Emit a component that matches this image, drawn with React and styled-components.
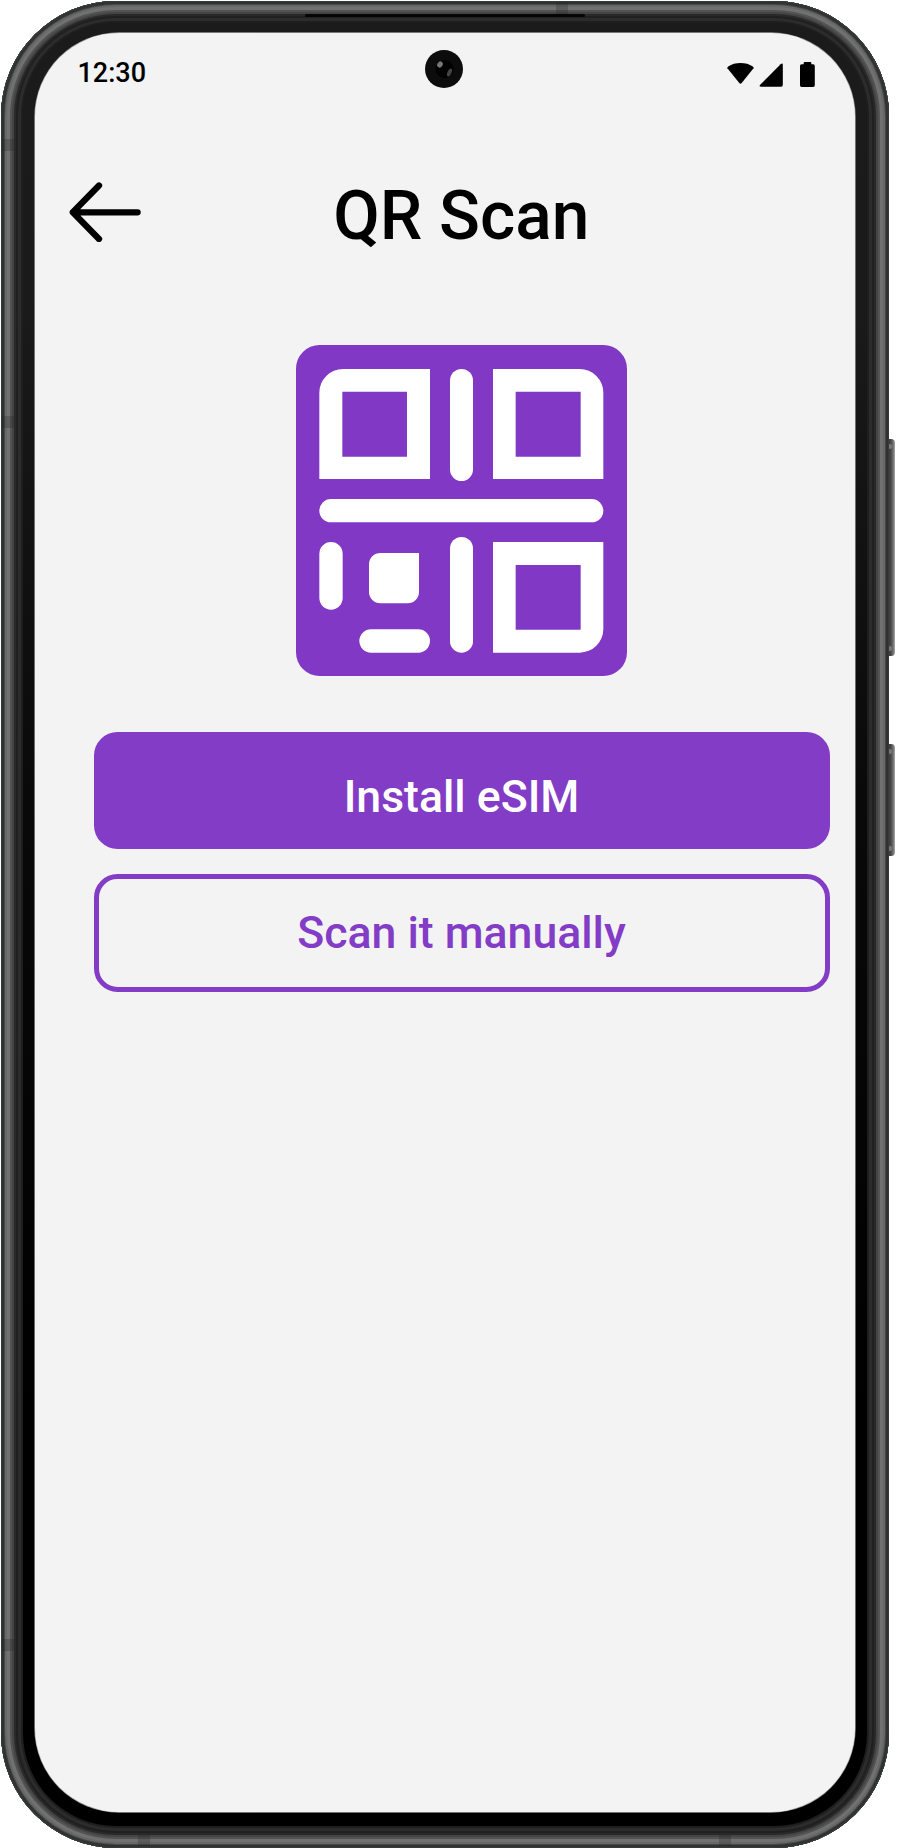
import React from "react";
import styled, { createGlobalStyle } from "styled-components";

const PURPLE = "#833cc6";

const GlobalStyle = createGlobalStyle`
  * { box-sizing: border-box; }
  body { margin: 0; background: #fff; font-family: Roboto, "Liberation Sans", sans-serif; }
`;

const Stage = styled.main`
  position: relative;
  width: 897px;
  height: 1848px;
  overflow: hidden;
  padding: 1px 0 0 1px;
`;

const Phone = styled.div`
  position: relative;
  width: 887.5px;
  height: 1846.5px;
  padding: 32px 33.5px 36px 33.5px;
  border-radius: 115px;
  background: linear-gradient(#1b1b1b 0, #1a1a1a 300px, #090909 800px, #000 1400px);
  box-shadow:
    inset 0 0 0 1px #363a3a,
    inset 0 0 0 3px #303131,
    inset 0 0 0 4px #494949,
    inset 0 0 0 6px #676767,
    inset 0 0 0 9px #717171,
    inset 0 0 0 11px #535353,
    inset 0 0 0 13px #444,
    inset 0 0 0 15px #292929,
    inset 0 0 0 17px #202020,
    inset 0 0 0 20px #2c2c2c,
    inset 0 0 0 22px #1e1e1e;
`;

const SideKey = styled.span`
  position: absolute;
  left: 887px;
  top: ${(p) => p.$top}px;
  width: 8px;
  height: ${(p) => p.$height}px;
  border-radius: 0 4px 4px 0;
  background: linear-gradient(90deg, #303030, #484848 50%, #777 80%, #aaa);

  &::before,
  &::after {
    content: "";
    position: absolute;
    left: 1px;
    width: 4px;
    height: 5px;
    border-radius: 2px;
    background: #777;
  }
  &::before { top: 5px; }
  &::after { bottom: 5px; }
`;

const Speaker = styled.span`
  position: absolute;
  left: 304px;
  top: 13px;
  width: 280px;
  height: 3px;
  border-radius: 2px;
  background: #050505;
`;

const Seam = styled.span`
  position: absolute;
  left: ${(p) => p.$x}px;
  top: ${(p) => p.$y}px;
  width: 12px;
  height: 12px;
  background: rgba(35, 35, 35, 0.26);
`;

const Screen = styled.section`
  position: relative;
  height: 100%;
  border-radius: 84px;
  background: #f3f3f3;
  box-shadow: 0 0 0 0.7px #999;
  display: flex;
  flex-direction: column;
`;

const Camera = styled.svg`
  position: absolute;
  left: 389px;
  top: 16px;
`;

const StatusBar = styled.div`
  display: flex;
  justify-content: space-between;
  align-items: flex-start;
  height: 112px;
  padding: 24px 39px 0 43px;
`;

const Time = styled.time`
  font-size: 27px;
  line-height: 32px;
  font-weight: 500;
  color: #000;
`;

const StatusIcons = styled.svg`
  margin-top: 4px;
`;

const Header = styled.header`
  display: grid;
  grid-template-columns: 72px 1fr 54px;
  align-items: start;
  height: 140px;
  padding: 0 19px 0 34px;
`;

const BackButton = styled.button`
  display: flex;
  margin-top: 37px;
  padding: 0;
  border: 0;
  background: none;
  color: #000;
`;

const Title = styled.h1`
  margin: 31px 0 0;
  text-align: center;
  font-size: 67.6px;
  line-height: 80px;
  font-weight: 500;
  color: #000;
`;

const Content = styled.div`
  display: flex;
  flex-direction: column;
  align-items: center;
  padding: 60.3px 25.5px 0 59px;
`;

const QrArt = styled.svg`
  display: block;
  margin-bottom: 55.7px;
`;

const Action = styled.button`
  width: 100%;
  height: 117.3px;
  margin-bottom: 25px;
  padding: ${(p) => (p.$outlined ? "1px 0 0" : "13px 0 0")};
  border: ${(p) => (p.$outlined ? `5px solid ${PURPLE}` : "0")};
  border-radius: 23.5px;
  background: ${(p) => (p.$outlined ? "transparent" : PURPLE)};
  color: ${(p) => (p.$outlined ? PURPLE : "#fff")};
  font-family: inherit;
  font-size: 44.6px;
  line-height: 53px;
  font-weight: 500;
`;

const BackArrow = () => (
  <svg width="72" height="60" viewBox="0 0 72 60" fill="none" stroke="currentColor" strokeWidth="6.3" strokeLinecap="round" strokeLinejoin="round">
    <path d="M68.6 30.3H3.8M30 3.5L3.8 30.3L30 57" />
  </svg>
);

const QrCode = () => (
  <QrArt width="331" height="331" viewBox="48 45 993 993" fill="#fff">
    <rect x="48" y="45" width="993" height="993" rx="71" fill="#8038c5" />
    <path fillRule="evenodd" d="M189 117H450V447H118V188A71 71 0 0 1 189 117ZM187 185V380H381V185Z" />
    <path fillRule="evenodd" d="M639 117H899A71 71 0 0 1 970 188V447H639ZM707 185V380H902V185Z" />
    <path fillRule="evenodd" d="M639 636H970V897A71 71 0 0 1 899 968H639ZM707 705V899H902V705Z" />
    <rect x="510" y="117" width="69" height="336" rx="34.5" />
    <rect x="118" y="507" width="852" height="70" rx="35" />
    <rect x="118" y="636" width="70" height="203" rx="35" />
    <rect x="510" y="621" width="69" height="347" rx="34.5" />
    <rect x="238" y="898" width="212" height="70" rx="35" />
    <path d="M301 669H417V786A34 34 0 0 1 383 820H301A34 34 0 0 1 267 786V703A34 34 0 0 1 301 669Z" />
  </QrArt>
);

export default function App() {
  return (
    <>
      <GlobalStyle />
      <Stage>
        <SideKey $top={439} $height={217} />
        <SideKey $top={744} $height={112} />
        <Phone>
          <Speaker />
          <Seam $x={555} $y={1} />
          <Seam $x={137} $y={1833} />
          <Seam $x={718} $y={1833} />
          <Seam $x={1} $y={138} />
          <Seam $x={1} $y={415} />
          <Seam $x={1} $y={1638} />
          <Screen>
            <Camera width="40" height="40" viewBox="0 0 40 40">
              <circle cx="20" cy="20" r="19" fill="#0c0c0c" />
              <circle cx="20.5" cy="20" r="9" fill="#020202" />
              <ellipse cx="16" cy="15.5" rx="2.6" ry="3.2" fill="#777" transform="rotate(35 16 15.5)" />
              <ellipse cx="25.5" cy="23.5" rx="2" ry="4.2" fill="#444" transform="rotate(25 25.5 23.5)" />
            </Camera>
            <StatusBar>
              <Time>12:30</Time>
              <StatusIcons width="90" height="27" viewBox="0 0 90 27">
                <path d="M1.4 7.2Q1.2 6.2 2.2 5.4Q7.5 2 14.5 2Q21.5 2 26.8 5.4Q27.8 6.2 27.5 7.2L15.7 22Q14.5 23.4 13.3 22Z" />
                <path d="M34.2 23.8L54.6 3.2Q56.8 1.6 56.8 4V24.1Q56.8 25.8 55.1 25.8H35.2Q32.5 25.6 34.2 23.8Z" />
                <path d="M78.5 1H84.5Q85.3 1 85.3 1.8V3.3H87.2Q88.8 3.3 88.8 4.9V24.3Q88.8 25.9 87.2 25.9H75.6Q74 25.9 74 24.3V4.9Q74 3.3 75.6 3.3H77.7V1.8Q77.7 1 78.5 1Z" />
              </StatusIcons>
            </StatusBar>
            <Header>
              <BackButton aria-label="Back"><BackArrow /></BackButton>
              <Title>QR Scan</Title>
            </Header>
            <Content>
              <QrCode />
              <Action>Install eSIM</Action>
              <Action $outlined>Scan it manually</Action>
            </Content>
          </Screen>
        </Phone>
      </Stage>
    </>
  );
}
